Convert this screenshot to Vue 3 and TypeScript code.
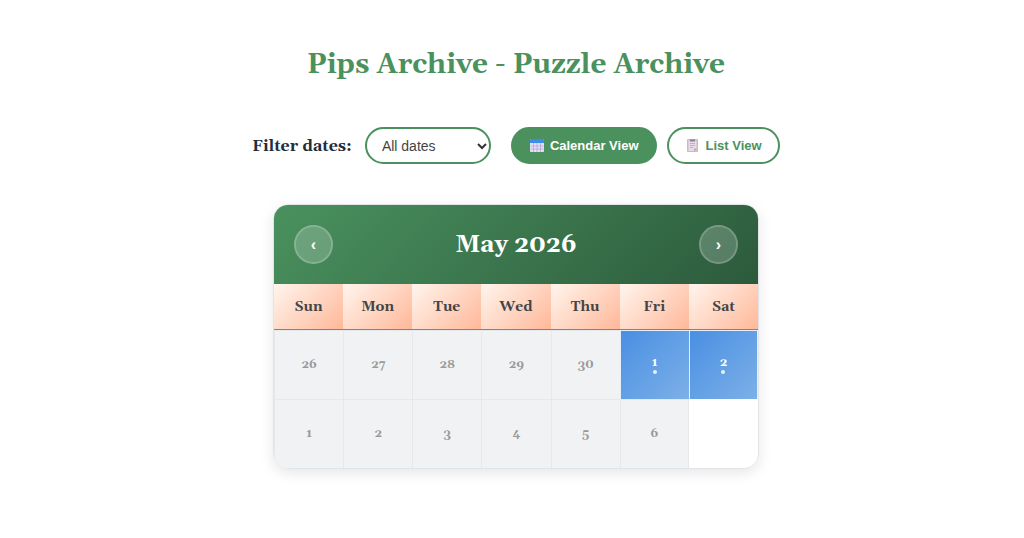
<script setup lang="ts">
import { ref } from 'vue'

interface Day {
  label: number
  active: boolean
}

const filter = ref('all')
const view = ref<'calendar' | 'list'>('calendar')
const weekdays: string[] = ['Sun', 'Mon', 'Tue', 'Wed', 'Thu', 'Fri', 'Sat']
const muted = (label: number): Day => ({ label, active: false })
const active = (label: number): Day => ({ label, active: true })
const weeks: Day[][] = [
  [muted(26), muted(27), muted(28), muted(29), muted(30), active(1), active(2)],
  [muted(1), muted(2), muted(3), muted(4), muted(5), muted(6)],
]
</script>

<template>
  <main class="page">
    <h1 class="title">Pips Archive - Puzzle Archive</h1>

    <div class="controls">
      <div class="filter">
        <label class="filter-label" for="date-filter">Filter dates:</label>
        <div class="select-wrap">
          <select id="date-filter" v-model="filter" class="filter-select">
            <option value="all">All dates</option>
          </select>
          <svg class="chevron" viewBox="0 0 10 8" aria-hidden="true">
            <path d="M1 2l4 4 4-4" fill="none" stroke="#333" stroke-width="2" />
          </svg>
        </div>
      </div>
      <div class="views">
        <button type="button" class="view-button" :class="{ selected: view === 'calendar' }" @click="view = 'calendar'">
          <svg class="icon" viewBox="0 0 16 16" aria-hidden="true">
            <rect x="1" y="1" width="14" height="13" rx="1" fill="#e4dff7" />
            <path d="M1 5V2q0-1 1-1h12q1 0 1 1v3z" fill="#3d8bea" />
            <path d="M4.500 5v9M8 5v9M11.500 5v9M1.500 8h13M1.500 11h13" stroke="#b9a5d2" stroke-width=".8" />
          </svg>
          <span>Calendar View</span>
        </button>
        <button type="button" class="view-button" :class="{ selected: view === 'list' }" @click="view = 'list'">
          <svg class="icon" viewBox="0 0 16 16" aria-hidden="true">
            <rect x="2" y="1" width="11" height="13" rx="1" fill="#d9b8ae" />
            <path d="M3.500 2.500h8v8L9 13H3.500z" fill="#e5dcef" />
            <path d="M11.500 10.500H9V13z" fill="#b99fae" />
            <path d="M5 1.500h5v2H5z" fill="#85839b" />
            <path d="M5 5.500h5M5 7.500h5M5 9.500h3" stroke="#b5a6c5" stroke-width=".8" />
          </svg>
          <span>List View</span>
        </button>
      </div>
    </div>

    <section class="calendar" aria-label="Puzzle calendar">
      <header class="calendar-header">
        <button type="button" class="nav-button" aria-label="Previous month">‹</button>
        <h2 class="month">May 2026</h2>
        <button type="button" class="nav-button" aria-label="Next month">›</button>
      </header>
      <table class="days">
        <thead>
          <tr>
            <th v-for="name in weekdays" :key="name" scope="col">{{ name }}</th>
          </tr>
        </thead>
        <tbody>
          <tr v-for="(week, index) in weeks" :key="index">
            <td v-for="day in week" :key="day.label" :class="{ active: day.active }">
              <div class="day">
                <span>{{ day.label }}</span>
                <i v-if="day.active" class="dot"></i>
              </div>
            </td>
          </tr>
        </tbody>
      </table>
    </section>
  </main>
</template>

<style>
body {
  background: #fff;
}
</style>

<style scoped>
.page {
  box-sizing: border-box;
  padding: 40px 0 40px 8px;
  font-family: Georgia, Gelasio, "Liberation Serif", serif;
  color: #1f2d3d;
}

.title {
  margin: 0 0 37px;
  font-size: 28px;
  line-height: 50px;
  text-align: center;
  color: #4a915e;
}

.controls {
  display: flex;
  justify-content: center;
  gap: 20px;
  margin-bottom: 40px;
}

.filter {
  display: flex;
  align-items: center;
  gap: 13px;
}

.filter-label {
  font-size: 16px;
  font-weight: 700;
  line-height: 20px;
}

.select-wrap {
  position: relative;
}

.filter-select {
  display: block;
  box-sizing: border-box;
  width: 126px;
  height: 37px;
  padding: 0 24px 0 15px;
  appearance: none;
  border: 2px solid #4a915e;
  border-radius: 20px;
  background: #fff;
  font-family: "Liberation Sans", sans-serif;
  font-size: 14px;
  color: #444;
}

.chevron {
  position: absolute;
  top: 15px;
  right: 4px;
  width: 10px;
  height: 8px;
  pointer-events: none;
}

.views {
  display: flex;
  gap: 10px;
}

.view-button {
  display: flex;
  align-items: center;
  gap: 5px;
  height: 37px;
  padding: 0 16px;
  border: 2px solid #4a915e;
  border-radius: 20px;
  background: #fff;
  font-family: "Liberation Sans", sans-serif;
  font-size: 13px;
  font-weight: 700;
  color: #4a915e;
  white-space: nowrap;
}

.view-button.selected {
  background: #4a915e;
  color: #fff;
}

.icon {
  width: 16px;
  height: 16px;
}

.calendar {
  box-sizing: border-box;
  width: 100%;
  max-width: 486px;
  margin: 0 auto;
  overflow: hidden;
  border: 1px solid #e1e5e9;
  border-radius: 15px;
  box-shadow: 0 4px 14px rgba(0, 0, 0, 0.1);
}

.calendar-header {
  display: flex;
  align-items: center;
  justify-content: space-between;
  padding: 20px;
  background: linear-gradient(135deg, #4a915e, #2c5a3c);
}

.month {
  margin: 0;
  font-size: 24px;
  line-height: 36px;
  color: #fff;
}

.nav-button {
  width: 39px;
  height: 39px;
  padding: 0;
  border: 2px solid rgba(255, 255, 255, 0.2);
  border-radius: 50%;
  background: rgba(255, 255, 255, 0.2);
  background-clip: padding-box;
  border-color: rgba(255, 255, 255, 0.35);
  font-family: "Liberation Sans", sans-serif;
  font-size: 16px;
  font-weight: 700;
  line-height: 32px;
  color: #fff;
}

.days {
  width: 100%;
  table-layout: fixed;
  border-spacing: 0;
}

.days th {
  height: 45px;
  padding: 0;
  border-bottom: 1px solid #5b9b6c;
  background: linear-gradient(135deg, #fff5ee, #ffb899);
  font-size: 14px;
  color: #444;
}

.days td {
  box-sizing: border-box;
  height: 69px;
  padding: 0;
  border: 1px solid #e6e9ec;
  border-width: 1px 0 0 1px;
  background: #f1f2f4;
  font-size: 12px;
  font-weight: 700;
  color: #999;
}

.days td.active {
  background: linear-gradient(135deg, #4a8fe2, #7cb0e8) padding-box;
  border-color: #e6eef8;
  color: #fff;
}

.days td:last-child {
  border-right-width: 1px;
}

.day {
  display: flex;
  flex-direction: column;
  align-items: center;
  line-height: 14px;
}

.dot {
  width: 4px;
  height: 4px;
  border-radius: 50%;
  background: #e5f1ff;
}
</style>
